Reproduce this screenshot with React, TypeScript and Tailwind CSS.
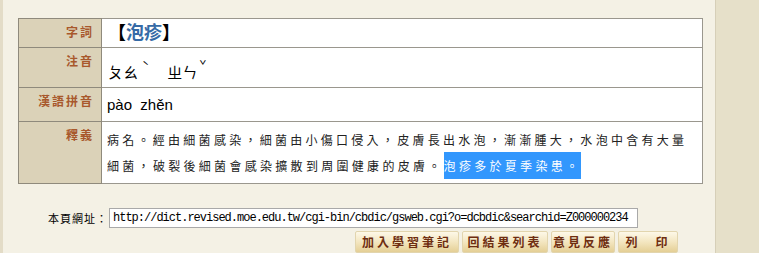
const cjk = '"Noto Sans CJK TC", "Noto Sans CJK SC", sans-serif';

function Label({ children }: { children: React.ReactNode }) {
  return (
    <td
      className="w-[83px] bg-[#dbd2b8] border border-[#8f8a7c] align-top text-right pr-[7px] pt-[6px] text-[12px] font-bold tracking-[2px] leading-[14px] text-[#a8582c]"
      style={{ fontFamily: cjk }}
    >
      {children}
    </td>
  );
}

function Btn({ children, w }: { children: React.ReactNode; w: string }) {
  return (
    <div
      className={`${w} h-[22px] flex items-center justify-center rounded-[2px] border border-[#e2d5ae] bg-gradient-to-b from-[#fdf8e8] via-[#f3e6c0] to-[#e4cf95] text-[12px] font-bold tracking-[3px] text-[#6e2d10]`}
      style={{ fontFamily: cjk }}
    >
      {children}
    </div>
  );
}

export default function App() {
  return (
    <div className="flex w-[759px] h-[253px] overflow-hidden bg-[#f4f1e5]">
      <div className="w-[3px] bg-[#e3dcc7]" />
      <div className="flex-1 pl-[15px] pr-[12px] pt-[18px]">
        <table className="w-[685px] table-fixed border-collapse border border-[#868172]">
          <colgroup>
            <col className="w-[83px]" />
            <col />
          </colgroup>
          <tbody>
            <tr className="h-[29px]">
              <Label>字詞</Label>
              <td className="bg-white border border-[#9a978e] pl-[6px] align-middle">
                <span
                  className="text-[18px] leading-[20px] font-bold text-black"
                  style={{ fontFamily: cjk }}
                >
                  【<span className="text-[#356aa6]">泡疹</span>】
                </span>
              </td>
            </tr>
            <tr className="h-[40px]">
              <Label>注音</Label>
              <td className="bg-white border border-[#9a978e] pl-[6px] pt-[6px] align-middle">
                <span className="text-[15px] text-black" style={{ fontFamily: cjk }}>
                  ㄆㄠ<span className="align-[7px] text-[12px] ml-[4px]">ˋ</span>
                  <span className="inline-block w-[18px]" />
                  ㄓㄣ<span className="align-[7px] text-[12px] ml-[2px]">ˇ</span>
                </span>
              </td>
            </tr>
            <tr className="h-[34px]">
              <Label>漢語拼音</Label>
              <td className="bg-white border border-[#9a978e] pl-[5px] align-middle">
                <span
                  className="text-[15px] text-black whitespace-pre"
                  style={{ fontFamily: '"Liberation Sans", Arial, sans-serif' }}
                >
                  pào  zhěn
                </span>
              </td>
            </tr>
            <tr className="h-[62px]">
              <Label>釋義</Label>
              <td
                className="bg-white border border-[#9a978e] pl-[5px] pr-[15px] pt-[5px] pb-[3px] align-top text-[12px] leading-[26px] text-[#222] tracking-[3.3px]"
                style={{ fontFamily: cjk }}
              >
                <div className="text-justify [text-align-last:justify] whitespace-nowrap tracking-[3px]">
                  病名。經由細菌感染，細菌由小傷口侵入，皮膚長出水泡，漸漸腫大，水泡中含有大量
                </div>
                <div>
                  細菌，破裂後細菌會感染擴散到周圍健康的皮膚。
                  <span className="bg-[#3297fd] text-white py-[5px]">泡疹多於夏季染患。</span>
                </div>
              </td>
            </tr>
          </tbody>
        </table>

        <div className="flex items-center mt-[24px] ml-[30px]">
          <span
            className="text-[11px] tracking-[1px] text-black mr-[1px]"
            style={{ fontFamily: cjk }}
          >
            本頁網址：
          </span>
          <div
            className="w-[529px] h-[20px] bg-white border border-[#a9a9a9] pl-[3px] flex items-center text-[12px] tracking-[-1px] text-black whitespace-nowrap overflow-hidden"
            style={{ fontFamily: '"Liberation Mono", monospace' }}
          >
            http://dict.revised.moe.edu.tw/cgi-bin/cbdic/gsweb.cgi?o=dcbdic&amp;searchid=Z000000234
          </div>
        </div>

        <div className="flex justify-end gap-[3px] mt-[3px] mr-[25px]">
          <Btn w="w-[104px]">加入學習筆記</Btn>
          <Btn w="w-[86px]">回結果列表</Btn>
          <Btn w="w-[64px]">意見反應</Btn>
          <Btn w="w-[60px]">列　印</Btn>
        </div>
      </div>
      <div className="w-[44px] bg-[#e6e0c9] border-l border-[#d6cfb8]" />
    </div>
  );
}
